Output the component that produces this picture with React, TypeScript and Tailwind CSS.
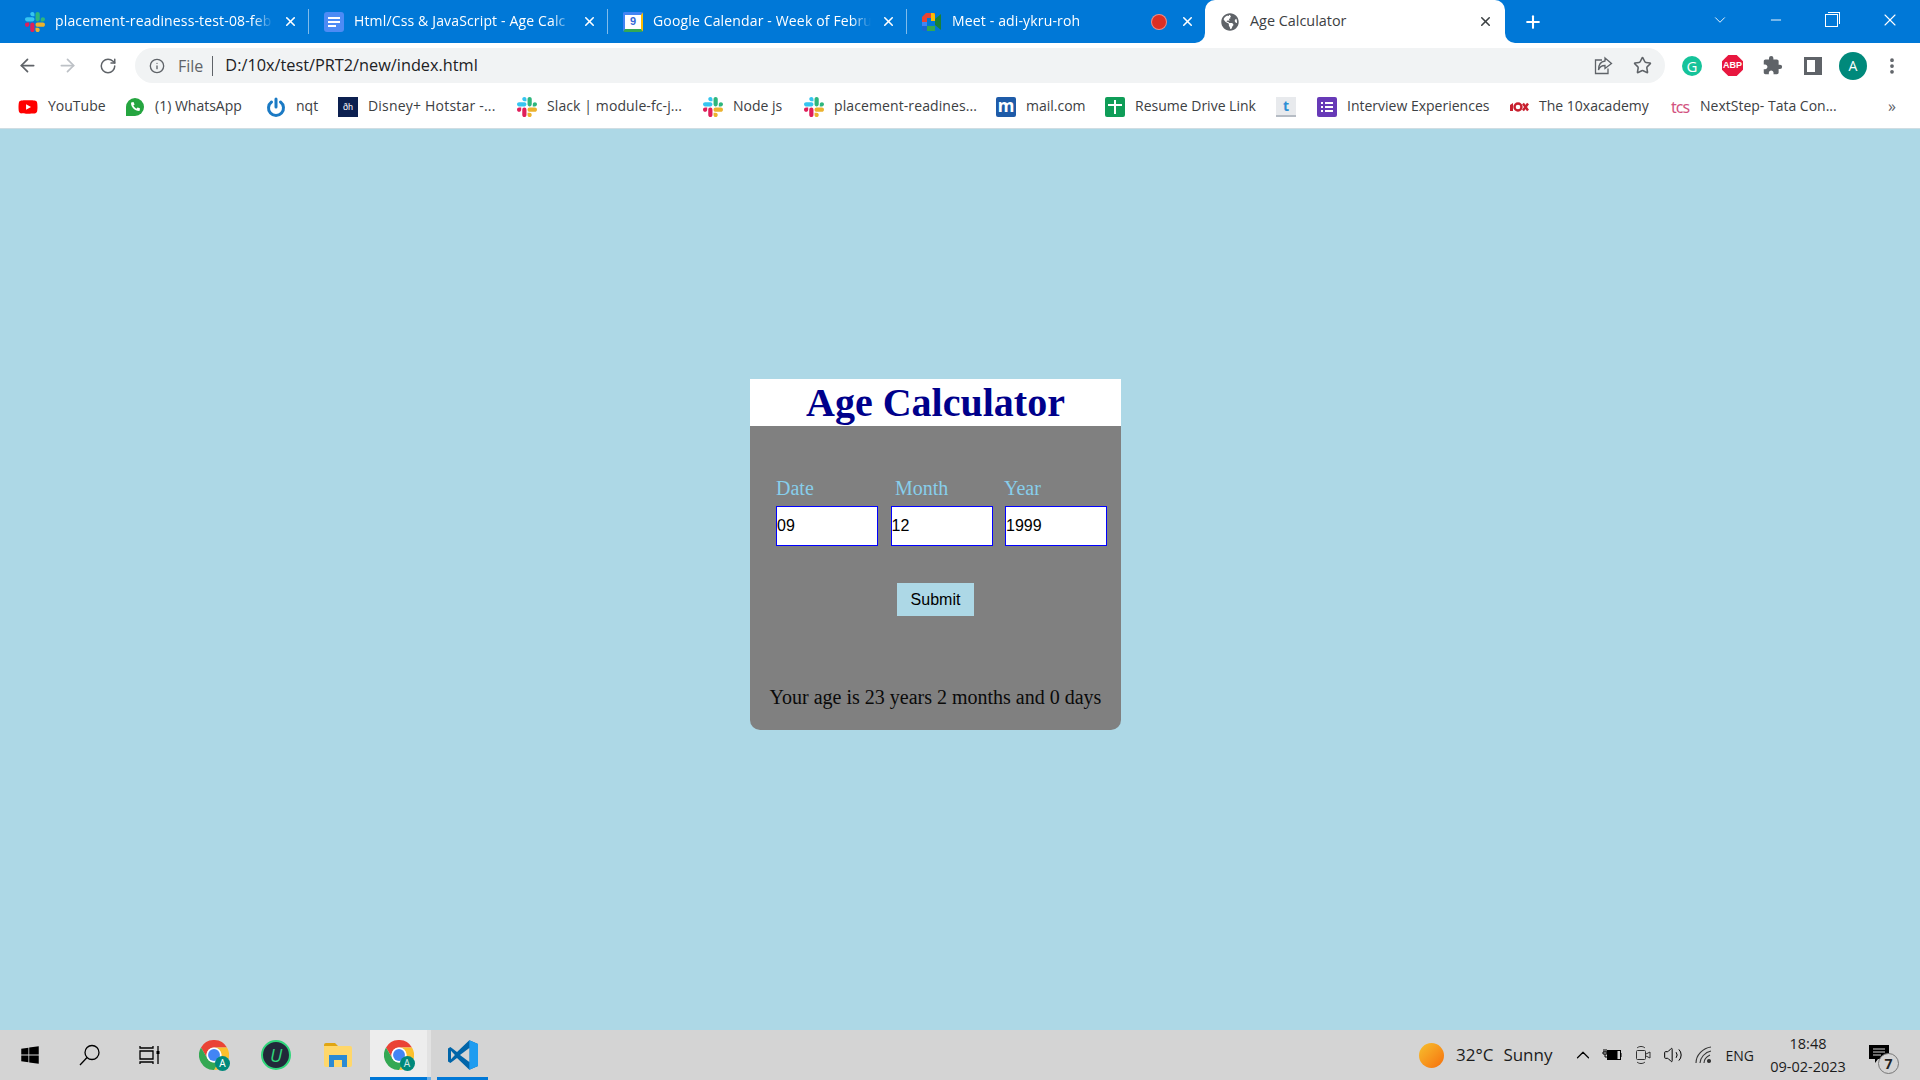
import React from 'react';
import { ArrowLeft, ArrowRight, RotateCw, Info, Star, X, Plus, ChevronDown, Minus, EllipsisVertical, ChevronUp, Volume2 } from 'lucide-react';
import { FaPhoneAlt, FaWindows, FaYoutube, FaGlobeAmericas } from 'react-icons/fa';
import { MdExtension } from 'react-icons/md';

const Slack = ({ size = 20 }: { size?: number }) => (
  <svg width={size} height={size} viewBox="0 0 122.8 122.8" className="shrink-0">
    <path fill="#e01e5a" d="M25.8 77.6c0 7.1-5.8 12.9-12.9 12.9S0 84.7 0 77.6s5.8-12.9 12.9-12.9h12.9v12.9zm6.5 0c0-7.1 5.8-12.9 12.9-12.9s12.9 5.8 12.9 12.9v32.3c0 7.1-5.8 12.9-12.9 12.9s-12.9-5.8-12.9-12.9V77.6z" />
    <path fill="#36c5f0" d="M45.2 25.8c-7.1 0-12.9-5.8-12.9-12.9S38.1 0 45.2 0s12.9 5.8 12.9 12.9v12.9H45.2zm0 6.5c7.1 0 12.9 5.8 12.9 12.9s-5.8 12.9-12.9 12.9H12.9C5.8 58.1 0 52.3 0 45.2s5.8-12.9 12.9-12.9h32.3z" />
    <path fill="#2eb67d" d="M97 45.2c0-7.1 5.8-12.9 12.9-12.9s12.9 5.8 12.9 12.9-5.8 12.9-12.9 12.9H97V45.2zm-6.5 0c0 7.1-5.8 12.9-12.9 12.9s-12.9-5.8-12.9-12.9V12.9C64.7 5.8 70.5 0 77.6 0s12.9 5.8 12.9 12.9v32.3z" />
    <path fill="#ecb22e" d="M77.6 97c7.1 0 12.9 5.8 12.9 12.9s-5.8 12.9-12.9 12.9-12.9-5.8-12.9-12.9V97h12.9zm0-6.5c-7.1 0-12.9-5.8-12.9-12.9s5.8-12.9 12.9-12.9h32.3c7.1 0 12.9 5.8 12.9 12.9s-5.8 12.9-12.9 12.9H77.6z" />
  </svg>
);

const Docs = () => (
  <svg width={20} height={20} viewBox="0 0 20 20" className="shrink-0">
    <rect x="0" y="0" width="20" height="20" rx="3" fill="#4d8bf5" />
    <path d="M4 5h12v2H4zM4 9h12v2H4zM4 13h8v2H4z" fill="#fff" />
  </svg>
);

const Calendar = () => (
  <div className="w-5 h-5 shrink-0 bg-white border-2 border-b-[3px] border-t-[3px] border-[#4285f4] border-r-[#fbbc04] border-b-[#34a853] rounded-[2px] flex items-center justify-center text-[11px] leading-none font-bold text-[#3367d6] font-['Liberation_Sans',sans-serif]">
    9
  </div>
);

const Meet = () => (
  <svg width={20} height={18} viewBox="0 0 20 18" className="shrink-0">
    <path d="M4 0h9v5H5v4H0V4z" fill="#ea4335" />
    <path d="M0 9h5v4H0z" fill="#4285f4" />
    <path d="M0 13h5v5H2a2 2 0 0 1-2-2z" fill="#1967d2" />
    <path d="M5 13h8v5H5z" fill="#34a853" />
    <path d="M13 0v5l0 8v3a2 2 0 0 1-2 2h2z" fill="#34a853" />
    <path d="M9 0h2a2 2 0 0 1 2 2v6H9z" fill="#fbbc04" />
    <path d="M13 6l6-5v16l-6-5z" fill="#188038" />
  </svg>
);

const Chrome = ({ size = 30, dim = false }: { size?: number; dim?: boolean }) => (
  <div className="relative shrink-0" style={{ width: size, height: size }}>
    <svg width={size} height={size} viewBox="0 0 48 48">
      <path fill="#ea4335" d="M24 12H44.8A24 24 0 0 0 3.2 12L13.6 30A12 12 0 0 1 24 12Z" />
      <path fill="#fbc02d" transform="rotate(120 24 24)" d="M24 12H44.8A24 24 0 0 0 3.2 12L13.6 30A12 12 0 0 1 24 12Z" />
      <path fill="#34a853" transform="rotate(240 24 24)" d="M24 12H44.8A24 24 0 0 0 3.2 12L13.6 30A12 12 0 0 1 24 12Z" />
      <circle cx="24" cy="24" r="12" fill="#fff" />
      <circle cx="24" cy="24" r="9.5" fill="#4285f4" />
    </svg>
    <span className={`absolute -right-[1px] -bottom-[1px] w-[15px] h-[15px] rounded-full bg-[#00897b] text-[10px] leading-[15px] text-center font-['Noto_Sans',sans-serif] ${dim ? 'text-[#cfe8e4]' : 'text-white'}`}>
      A
    </span>
  </div>
);

function Tab({ icon, title, extra }: { icon: React.ReactNode; title: string; extra?: React.ReactNode }) {
  return (
    <div className="w-[299px] h-full flex items-center pl-[15px] shrink-0">
      {icon}
      <span className="ml-[10px] pb-[2px] flex-1 min-w-0 overflow-hidden whitespace-nowrap text-[14px] tracking-[0.15px] text-white [mask-image:linear-gradient(to_left,transparent,black_20px)]">
        {title}
      </span>
      {extra}
      <X size={15} strokeWidth={2.5} className="text-white mx-[10px] shrink-0" />
      <div className="w-px h-[25px] bg-white/50 shrink-0" />
    </div>
  );
}

function Bookmark({ icon, label, textWidth }: { icon: React.ReactNode; label?: string; textWidth?: string }) {
  return (
    <div className="flex items-center gap-[10px] shrink-0">
      {icon}
      {label && <span className={`pb-[2px] text-[14px] text-[#3c4043] whitespace-nowrap ${textWidth}`}>{label}</span>}
    </div>
  );
}

const bookmarks = [
  { label: 'YouTube', textWidth: 'w-[56px]', icon: <FaYoutube size={20} className="text-[#ff0000]" /> },
  {
    label: '(1) WhatsApp',
    textWidth: 'w-[90px]',
    icon: (
      <div className="w-5 h-5 flex items-center justify-center">
        <div className="w-[18px] h-[18px] rounded-full rounded-bl-[3px] bg-[#25a540] flex items-center justify-center">
          <FaPhoneAlt size={9} className="text-white" />
        </div>
      </div>
    ),
  },
  {
    label: 'nqt',
    textWidth: 'w-[21px]',
    icon: (
      <svg width={20} height={20} viewBox="0 0 20 20" fill="none" stroke="#1b7ac4" strokeWidth="3" strokeLinecap="round">
        <path d="M10 2v8" />
        <path d="M5.5 5a7.5 7.5 0 1 0 9 0" />
      </svg>
    ),
  },
  {
    label: 'Disney+ Hotstar -...',
    textWidth: 'w-[128px] tracking-[0.2px]',
    icon: (
      <div className="w-5 h-5 bg-[#0c2050] text-white text-[9px] leading-5 text-center font-['Liberation_Sans',sans-serif]">
        ðh
      </div>
    ),
  },
  { label: 'Slack | module-fc-j...', textWidth: 'w-[135px] tracking-[0.1px]', icon: <Slack /> },
  { label: 'Node js', textWidth: 'w-[50px]', icon: <Slack /> },
  { label: 'placement-readines...', textWidth: 'w-[141px] tracking-[0.1px]', icon: <Slack /> },
  {
    label: 'mail.com',
    textWidth: 'w-[58px]',
    icon: (
      <div className="w-5 h-5 bg-[#1e5ba8] rounded-[2px] text-white text-[17px] leading-[18px] text-center font-bold font-['Noto_Sans',sans-serif]">
        m
      </div>
    ),
  },
  {
    label: 'Resume Drive Link',
    textWidth: 'w-[120px]',
    icon: (
      <svg width={20} height={20} viewBox="0 0 20 20">
        <rect width="20" height="20" rx="2" fill="#0f9d58" />
        <path d="M9 3h2v4h6v2h-6v8H9V9H3V7h6z" fill="#fff" />
      </svg>
    ),
  },
  {
    icon: (
      <div className="w-5 h-5 bg-[#e8eaed] border-b-2 border-[#b6bcc4] text-[#2d8fd5] text-[14px] leading-[18px] text-center font-bold font-['Noto_Sans',sans-serif]">
        t
      </div>
    ),
  },
  {
    label: 'Interview Experiences',
    textWidth: 'w-[141px]',
    icon: (
      <svg width={20} height={20} viewBox="0 0 20 20">
        <rect width="20" height="20" rx="2" fill="#673ab7" />
        <path d="M4 5h2v2H4zM8 5h8v2H8zM4 9h2v2H4zM8 9h8v2H8zM4 13h2v2H4zM8 13h8v2H8z" fill="#fff" />
      </svg>
    ),
  },
  {
    label: 'The 10xacademy',
    textWidth: 'w-[110px]',
    icon: (
      <svg width={20} height={20} viewBox="0 0 20 20">
        <path d="M1 8l3-2v8H1z" fill="#c8202f" />
        <circle cx="9" cy="10" r="3.5" fill="none" stroke="#c8202f" strokeWidth="2.4" />
        <path d="M14 6.500l5 7M19 6.500l-5 7" stroke="#c8202f" strokeWidth="2.4" />
      </svg>
    ),
  },
  {
    label: 'NextStep- Tata Con...',
    textWidth: 'w-[138px]',
    icon: (
      <div className="w-5 h-5 text-[16px] leading-5 text-center tracking-[-1px] text-[#d2527f] font-['Noto_Sans',sans-serif]">
        tcs
      </div>
    ),
  },
];

export default function App() {
  return (
    <div className="w-[1920px] h-[1080px] flex flex-col overflow-hidden bg-[#add8e6] font-['Open_Sans','Noto_Sans',sans-serif]">
      {/* tab strip */}
      <div className="h-[43px] bg-[#0078d7] flex items-center pl-[10px] shrink-0">
        <Tab icon={<Slack />} title="placement-readiness-test-08-feb" />
        <Tab icon={<Docs />} title="Html/Css & JavaScript - Age Calc" />
        <Tab icon={<Calendar />} title="Google Calendar - Week of Febru" />
        <Tab
          icon={<Meet />}
          title="Meet - adi-ykru-roh"
          extra={
            <span className="w-[14px] h-[14px] mr-[4px] rounded-full bg-[#dc2f24] ring-1 ring-[#f28b82] shrink-0" />
          }
        />
        <div className="relative w-[300px] h-full bg-white rounded-t-[10px] flex items-center pl-[16px] pr-[12px] shrink-0 -ml-[1px]">
          <div className="absolute -left-[10px] bottom-0 w-[10px] h-[10px] bg-white">
            <div className="w-full h-full bg-[#0078d7] rounded-br-[10px]" />
          </div>
          <div className="absolute -right-[10px] bottom-0 w-[10px] h-[10px] bg-white">
            <div className="w-full h-full bg-[#0078d7] rounded-bl-[10px]" />
          </div>
          <FaGlobeAmericas size={18} className="text-[#5f6368] shrink-0" />
          <span className="ml-[11px] pb-[2px] flex-1 text-[14.4px] text-[#3c4043] whitespace-nowrap">Age Calculator</span>
          <X size={15} strokeWidth={2.5} className="text-[#3c4043]" />
        </div>
        <Plus size={20} strokeWidth={2.5} className="text-white ml-[18px]" />
        <ChevronDown size={18} strokeWidth={1.2} className="text-white ml-[168px] -mt-[3px]" />
        <Minus size={16} strokeWidth={1.4} className="text-white ml-[39px] -mt-[3px]" />
        <div className="relative w-[13px] h-[13px] border border-white ml-[41px] -mt-[3px]">
          <div className="absolute -top-[3px] left-[2px] w-[12px] h-[12px] border-t border-r border-white" />
        </div>
        <X size={20} strokeWidth={1.3} className="text-white ml-[42px] -mt-[3px]" />
      </div>

      {/* toolbar */}
      <div className="h-[42px] pt-[3px] bg-white flex items-center shrink-0">
        <ArrowLeft size={21} className="text-[#5f6368] ml-[17px]" />
        <ArrowRight size={21} className="text-[#bdc1c6] ml-[19px]" />
        <RotateCw size={18} className="text-[#5f6368] ml-[21px]" />
        <div className="w-[1530px] h-[35px] ml-[18px] bg-[#f1f3f4] rounded-full flex items-center pl-[14px] pr-[13px]">
          <Info size={16} className="text-[#5f6368]" />
          <span className="ml-[13px] text-[16px] text-[#5f6368]">File</span>
          <span className="w-px h-[20px] bg-[#5f6368] ml-[9px]" />
          <span className="ml-[12px] text-[16.3px] text-[#202124]">D:/10x/test/PRT2/new/index.html</span>
          <svg width={20} height={20} viewBox="0 0 20 20" fill="none" stroke="#5f6368" strokeWidth="1.3" className="ml-auto">
            <path d="M9 4H2.500v13.500H15v-5" />
            <path d="M12 2l6.500 5.500L12 12.500V9.500C8.500 9.500 6.500 11 5.500 14 5.500 9 8 5.500 12 5z" />
          </svg>
          <Star size={19} className="text-[#5f6368] ml-[20px]" strokeWidth={2} />
        </div>
        <div className="w-5 h-5 rounded-full bg-[#15c39a] ml-[17px] text-white text-[15px] leading-5 text-center">G</div>
        <div className="w-[21px] h-[21px] bg-[#e8173f] ml-[20px] text-white text-[9px] leading-[21px] text-center font-bold font-['Liberation_Sans',sans-serif] [clip-path:polygon(30%_0,70%_0,100%_30%,100%_70%,70%_100%,30%_100%,0_70%,0_30%)]">ABP</div>
        <MdExtension size={21} className="text-[#5f6368] ml-[19px]" />
        <div className="w-[18px] h-[18px] border-[3px] border-r-[7px] border-[#5f6368] ml-[21px]" />
        <div className="w-7 h-7 rounded-full bg-[#00897b] ml-[17px] text-white text-[14px] leading-7 text-center">A</div>
        <EllipsisVertical size={20} strokeWidth={2.5} className="text-[#5f6368] ml-[15px]" />
      </div>

      {/* bookmarks */}
      <div className="h-[44px] bg-white border-b border-[#cfdde3] flex items-center pl-[18px] gap-[21px] shrink-0">
        {bookmarks.map((b, i) => (
          <Bookmark key={i} icon={b.icon} label={b.label} textWidth={b.textWidth} />
        ))}
        <span className="ml-[29px] pb-[2px] text-[#5f6368] text-[16px] leading-none">»</span>
      </div>

      {/* page */}
      <div className="flex-1 pt-[250px] pl-[750px] font-['Liberation_Serif',serif]">
        <div className="w-[371px] h-[351px] bg-[#808080] rounded-b-[10px] flex flex-col">
          <h1 className="h-[47px] bg-white text-center text-[40px] leading-[47px] font-bold text-[#00008b]">Age Calculator</h1>
          <div className="mt-[51px] pl-[26px] flex text-[20px] leading-[23px] text-[#87ceeb]">
            <label className="w-[119px]">Date</label>
            <label className="w-[109px]">Month</label>
            <label>Year</label>
          </div>
          <div className="mt-[6px] pl-[26px] flex gap-[12.500px] font-['Liberation_Sans',sans-serif]">
            <input defaultValue="09" className="w-[102px] h-[40px] bg-white border border-[#0000ff] pl-0 text-[16px] text-black outline-none" />
            <input defaultValue="12" className="w-[102px] h-[40px] bg-white border border-[#0000ff] pl-0 text-[16px] text-black outline-none" />
            <input defaultValue="1999" className="w-[102px] h-[40px] bg-white border border-[#0000ff] pl-0 text-[16px] text-black outline-none" />
          </div>
          <button className="mt-[37px] mx-auto w-[77px] h-[33px] bg-[#add8e6] text-[16px] text-black font-['Liberation_Sans',sans-serif]">Submit</button>
          <p className="mt-[70px] text-center text-[20px] leading-[23px] text-[#0a0a0a]">Your age is 23 years 2 months and 0 days</p>
        </div>
      </div>

      {/* taskbar */}
      <div className="h-[50px] bg-[#d4d4d4] flex items-center shrink-0 relative">
        <FaWindows size={20} className="text-black ml-[20px]" />
        <svg width={22} height={22} viewBox="0 0 22 22" fill="none" stroke="#000" strokeWidth="1.3" className="ml-[39px]">
          <circle cx="13" cy="8.500" r="7" />
          <path d="M8 13.500 1 21" />
        </svg>
        <svg width={22} height={20} viewBox="0 0 22 20" fill="none" stroke="#000" strokeWidth="1.3" className="ml-[38px]">
          <path d="M1 1v2h13V1M1 19v-2h13v2M1 6h13v8H1zM19 1v5M19 9v10" />
          <rect x="17.500" y="6" width="3" height="3" fill="#000" stroke="none" />
        </svg>
        <div className="ml-[38px]"><Chrome /></div>
        <div className="ml-[32px] w-[30px] h-[30px] rounded-full bg-[#22293a] border-2 border-[#2fd67a] flex items-center justify-center text-[#2fd67a] italic text-[18px] leading-none">U</div>
        <svg width={28} height={24} viewBox="0 0 28 24" className="ml-[33px]">
          <path d="M0 2a2 2 0 0 1 2-2h9l3 3H0z" fill="#e0a512" />
          <path d="M0 3h26a2 2 0 0 1 2 2v17a2 2 0 0 1-2 2H2a2 2 0 0 1-2-2z" fill="#ffd76a" />
          <path d="M5 12h18v12h-5v-7h-8v7H5z" fill="#2b8ad4" />
        </svg>
        <div className="ml-[18px] w-[57px] h-full bg-[#ededed] border-b-[3px] border-[#0078d7] flex items-center justify-center pt-[3px]">
          <Chrome dim />
        </div>
        <div className="w-[4px] h-full bg-[#e2e2e2] border-b-[3px] border-[#6aaee6]" />
        <div className="ml-[6px] w-[51px] h-full border-b-[3px] border-[#0078d7] flex items-center justify-center pt-[3px]">
          <svg width={30} height={30} viewBox="0 0 100 100">
            <path d="M71 99 30 60 8 77 0 72V28l8-5 22 17L71 1l29 12v74z" fill="#0065a9" />
            <path d="M71 1l29 12v74L71 99z" fill="#1f9cf0" />
            <path d="M71 27 40 50l31 23z" fill="#d4d4d4" />
            <path d="M10 36v28l13-14z" fill="#d4d4d4" />
          </svg>
        </div>
        <div className="ml-auto flex items-center">
          <div className="w-[25px] h-[25px] rounded-full bg-gradient-to-br from-[#f5c02e] to-[#f56d0a]" />
          <span className="ml-[12px] text-[17px] text-[#1c1c1c] whitespace-nowrap">32°C</span>
          <span className="ml-[10px] text-[17px] text-[#1c1c1c]">Sunny</span>
          <ChevronUp size={22} strokeWidth={1.3} className="text-black ml-[19px]" />
          <svg width={20} height={14} viewBox="0 0 20 14" className="ml-[8px]" fill="none" stroke="#000">
            <rect x="5.500" y="2.500" width="13" height="9" />
            <rect x="6" y="3" width="9" height="8" fill="#000" />
            <path d="M19 5v4M2 1v3M4 1v3M1 4h4v2H1zM3 6v3h3" strokeWidth="1" />
          </svg>
          <svg width={16} height={20} viewBox="0 0 16 20" className="ml-[13px]" fill="none" stroke="#333" strokeWidth="1">
            <rect x="1.500" y="5.500" width="9" height="9" rx="1" />
            <path d="M11 9l4-2v6l-4-2M2 3c2-2 6-2 8 0M2 17c2 2 6 2 8 0" />
          </svg>
          <Volume2 size={20} strokeWidth={1.2} className="text-black ml-[12px]" />
          <svg width={18} height={18} viewBox="0 0 18 18" className="ml-[12px]" fill="none" stroke="#333" strokeWidth="1.1">
            <path d="M1 17C1 9 8 2 16 1M5 17c0-5 5-11 11-12M9 17c0-3 2-6 6-8" />
            <circle cx="14" cy="15" r="1.500" fill="#333" />
          </svg>
          <span className="ml-[13px] text-[14px] text-[#1c1c1c]">ENG</span>
          <div className="ml-[15px] w-[78px] flex flex-col items-center text-[14.5px] leading-[23px] text-[#1c1c1c]">
            <span>18:48</span>
            <span>09-02-2023</span>
          </div>
          <div className="relative ml-[22px] mr-[31px] w-[20px] h-[30px] flex items-start pt-[5px]">
            <svg width={20} height={19} viewBox="0 0 20 19">
              <path d="M0 0h20v14H9l-3 4v-4H0z" fill="#000" />
              <path d="M4 4h12M4 7h12M4 10h8" stroke="#d4d4d4" strokeWidth="1" />
            </svg>
            <span className="absolute left-[9px] top-[13px] w-[21px] h-[21px] rounded-full border border-[#777] bg-[#d4d4d4] text-[14px] leading-[19px] text-center font-bold text-[#222]">7</span>
          </div>
        </div>
      </div>
    </div>
  );
}
